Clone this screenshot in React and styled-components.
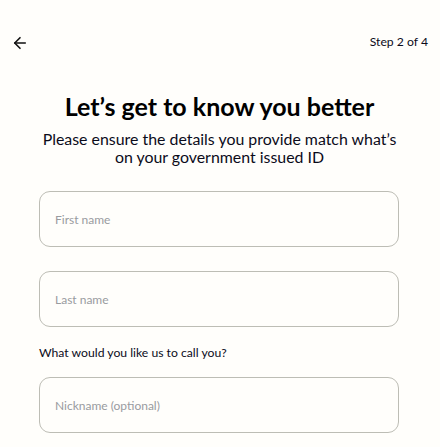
import React from "react";
import styled, { createGlobalStyle } from "styled-components";
import { ArrowLeft } from "lucide-react";

const Global = createGlobalStyle`
  html, body {
    margin: 0;
    padding: 0;
    background: #fffefb;
  }
  body {
    font-family: "Lato", "Open Sans", sans-serif;
    color: #0b0b1a;
  }
`;

const fields = [
  { placeholder: "First name" },
  { placeholder: "Last name" },
  { placeholder: "Nickname (optional)", label: "What would you like us to call you?" },
];

const App = () => {
  return (
    <Page>
      <Global />
      <TopBar>
        <BackBtn aria-label="Back">
          <ArrowLeft size={18} strokeWidth={2.2} />
        </BackBtn>
        <StepText>Step 2 of 4</StepText>
      </TopBar>
      <Header>
        <Title>Let’s get to know you better</Title>
        <Subtitle>
          Please ensure the details you provide match what’s
          <br />
          on your government issued ID
        </Subtitle>
      </Header>
      <Form>
        {fields.map((f, i) => (
          <Field key={i} $labelled={!!f.label}>
            {f.label && <Label>{f.label}</Label>}
            <Input placeholder={f.placeholder} />
          </Field>
        ))}
      </Form>
    </Page>
  );
};

export default App;

const Page = styled.div`
  width: 440px;
  min-height: 447px;
  box-sizing: border-box;
  padding: 32px 12px 0 11px;
`;

const TopBar = styled.div`
  display: flex;
  justify-content: space-between;
  align-items: center;
  height: 20px;
`;

const BackBtn = styled.button`
  all: unset;
  display: flex;
  align-items: center;
  color: #111;
  margin-top: 1px;
  cursor: pointer;
`;

const StepText = styled.span`
  font-size: 12.2px;
  color: #0b0b1a;
  margin-top: -2px;
`;

const Header = styled.div`
  margin-top: 40px;
  text-align: center;
`;

const Title = styled.h1`
  margin: 0;
  font-size: 25px;
  font-weight: 700;
  line-height: 28px;
  color: #000;
`;

const Subtitle = styled.p`
  margin: 10px 0 0;
  font-size: 15.9px;
  line-height: 18px;
  color: #0b0b1a;
`;

const Form = styled.div`
  margin: 25px 0 0 28px;
  width: 360px;
  display: flex;
  flex-direction: column;
  gap: 24px;
`;

const Field = styled.div`
  display: flex;
  flex-direction: column;
  gap: 17px;
  margin-top: ${(p) => (p.$labelled ? "-5px" : "0")};
`;

const Label = styled.div`
  font-size: 12.2px;
  font-weight: 400;
  color: #0b0b1a;
  line-height: 14px;
`;

const Input = styled.input`
  box-sizing: border-box;
  width: 360px;
  height: 56px;
  border: 1px solid #bdbdb5;
  border-radius: 11px;
  background: transparent;
  padding: 0 15px;
  font-family: inherit;
  font-size: 12px;
  color: #0b0b1a;
  outline: none;

  &::placeholder {
    color: #999b9f;
  }
`;
